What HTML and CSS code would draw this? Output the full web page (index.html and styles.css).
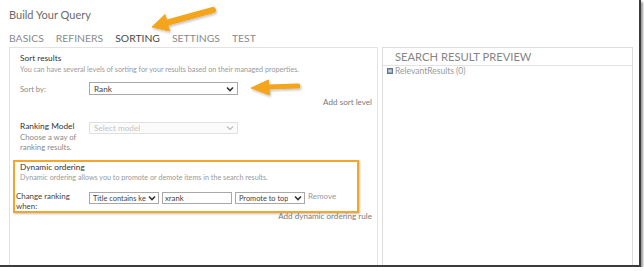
FILE: index.html
```html
<!DOCTYPE html>
<html lang="en">
<head>
    <meta charset="UTF-8">
    <title>Build Your Query</title>
    <link rel="stylesheet" href="styles.css">
</head>
<body>
    <div class="shot">
        <h1 class="title">Build Your Query</h1>
        <ul class="tabs">
            <li>BASICS</li>
            <li>REFINERS</li>
            <li class="active">SORTING</li>
            <li>SETTINGS</li>
            <li>TEST</li>
        </ul>

        <div class="panels">
            <div class="panel left">
                <div class="section-title">Sort results</div>
                <div class="desc">You can have several levels of sorting for your results based on their managed properties.</div>

                <div class="row sort-row">
                    <span class="label">Sort by:</span>
                    <div class="select wide">Rank<span class="chev"><svg width="8" height="6" viewBox="0 0 8 6"><path d="M1 1.5 L4 4.5 L7 1.5" fill="none" stroke="#333" stroke-width="1.6"/></svg></span></div>
                </div>
                <div class="link-right">Add sort level</div>

                <div class="row model-row">
                    <div class="model-label">
                        <div class="section-title">Ranking Model</div>
                        <div class="desc">Choose a way of ranking results.</div>
                    </div>
                    <div class="select wide disabled">Select model<span class="chev"><svg width="8" height="6" viewBox="0 0 8 6"><path d="M1 1.5 L4 4.5 L7 1.5" fill="none" stroke="#bbb" stroke-width="1.2"/></svg></span></div>
                </div>

                <div class="dynamic">
                    <div class="section-title">Dynamic ordering</div>
                    <div class="desc">Dynamic ordering allows you to promote or demote items in the search results.</div>
                    <div class="row rule-row">
                        <span class="rule-label">Change ranking when:</span>
                        <div class="select small"><span class="clip">Title contains ke</span><span class="chev"><svg width="8" height="6" viewBox="0 0 8 6"><path d="M1 1.5 L4 4.5 L7 1.5" fill="none" stroke="#333" stroke-width="1.6"/></svg></span></div>
                        <div class="input">xrank</div>
                        <div class="select small"><span class="clip">Promote to top</span><span class="chev"><svg width="8" height="6" viewBox="0 0 8 6"><path d="M1 1.5 L4 4.5 L7 1.5" fill="none" stroke="#333" stroke-width="1.6"/></svg></span></div>
                        <span class="remove">Remove</span>
                    </div>
                </div>
                <div class="link-right rule-link">Add dynamic ordering rule</div>
            </div>

            <div class="panel right">
                <div class="preview-head">SEARCH RESULT PREVIEW</div>
                <div class="preview-item">
                    <svg width="6" height="6" viewBox="0 0 6 6"><rect x="0.5" y="0.5" width="5" height="5" fill="#8fa3bd" stroke="#5d7391"/><rect x="1.5" y="2.5" width="3" height="1" fill="#fff"/></svg>
                    RelevantResults (0)
                </div>
            </div>
        </div>

        <svg class="arrows" width="639" height="265" viewBox="0 0 639 265">
            <g fill="#f5a51c" stroke="#f5a51c" filter="url(#sh)">
                <line x1="213" y1="10" x2="166" y2="23" stroke-width="6" stroke-linecap="round"/>
                <polygon points="152,27 169.5,31 165,14.5" stroke-width="1" stroke-linejoin="round"/>
                <path d="M298 86 Q285 86.5 268 87" fill="none" stroke-width="5" stroke-linecap="round"/>
                <polygon points="251,88 269.5,95 268.5,80" stroke-width="1" stroke-linejoin="round"/>
            </g>
            <defs>
                <filter id="sh" x="-20%" y="-20%" width="140%" height="160%">
                    <feDropShadow dx="1" dy="1.5" stdDeviation="1" flood-color="#000" flood-opacity="0.25"/>
                </filter>
            </defs>
        </svg>
    </div>
</body>
</html>
```

FILE: styles.css
```css
body {
    margin: 0;
    background: #fff;
    font-family: Lato, "Open Sans", sans-serif;
}
.shot {
    position: relative;
    width: 639px;
    height: 265px;
    overflow: hidden;
    background: #fff;
    border-right: 2px solid #3c3c3c;
    border-bottom: 2px solid #3c3c3c;
    box-shadow: 2px 2px 2px #9a9a9a;
}
.title {
    margin: 0;
    padding: 5px 0 0 9px;
    font-size: 11px;
    line-height: 19px;
    font-weight: 400;
    color: #6a6a6a;
}
.tabs {
    list-style: none;
    margin: 0;
    padding: 5px 0 0 9px;
    display: flex;
    gap: 12px;
    font-size: 10.4px;
    line-height: 18px;
    font-weight: 400;
    color: #8a8a8a;
}
.tabs .active {
    color: #4a4a4a;
}
.panels {
    display: flex;
    gap: 4px;
    padding-left: 9px;
}
.panel {
    height: 240px;
    border: 1px solid #e2e2e2;
    box-sizing: border-box;
}
.panel.left {
    width: 369px;
    padding: 5px 5px 0 10px;
}
.panel.right {
    width: 251px;
    border-color: #dcdcdc;
}
.section-title {
    font-size: 8.3px;
    line-height: 11px;
    color: #333;
}
.desc {
    font-size: 7.2px;
    line-height: 11px;
    color: #9a9a9a;
}
.row {
    display: flex;
    align-items: center;
}
.label {
    width: 69px;
    font-size: 7.6px;
    color: #8a8a8a;
}
.sort-row {
    margin-top: 7px;
}
.select {
    height: 13px;
    box-sizing: border-box;
    border: 1px solid #a8a8a8;
    display: flex;
    align-items: center;
    justify-content: space-between;
    padding: 0 3px 0 4px;
    font-size: 8.2px;
    color: #444;
    background: #fff;
}
.select.wide {
    width: 149px;
}
.select.disabled {
    height: 12px;
    border-color: #e0e0e0;
    color: #c4c4c4;
    background: #fbfbfb;
}
.chev {
    display: flex;
    flex-shrink: 0;
}
.link-right {
    text-align: right;
    font-size: 8.1px;
    line-height: 10px;
    color: #7a7a7a;
    margin-top: 2px;
}
.model-row {
    margin-top: 14px;
    align-items: flex-start;
}
.model-label {
    width: 69px;
}
.model-label .desc {
    font-size: 7.8px;
    line-height: 10px;
    color: #8a8a8a;
}
.model-row .select {
    margin-top: 1px;
}
.dynamic {
    margin: 8px 13px 0 -7px;
    border: 2px solid #f3a62a;
    padding: 0 0 0 5px;
    box-shadow: 1px 1px 2px rgba(0,0,0,0.25);
}
.dynamic .desc {
    line-height: 10px;
}
.rule-row {
    margin: 8px 0 0 -4px;
    gap: 3px;
    align-items: flex-start;
}
.rule-label {
    width: 70px;
    font-size: 7.9px;
    line-height: 10px;
    color: #444;
}
.select.small {
    width: 70px;
    height: 12px;
    margin-top: 1px;
    padding: 0 2px 0 3px;
    font-size: 7.4px;
}
.clip {
    white-space: nowrap;
    overflow: hidden;
}
.input {
    width: 70px;
    height: 12px;
    margin-top: 1px;
    box-sizing: border-box;
    border: 1px solid #a8a8a8;
    font-size: 7.7px;
    line-height: 10px;
    padding-left: 2px;
    color: #444;
}
.remove {
    font-size: 8px;
    line-height: 10px;
    color: #999;
}
.rule-link {
    margin-top: -2px;
}
.preview-head {
    height: 17px;
    border-bottom: 1px solid #e2e2e2;
    padding-left: 12px;
    font-size: 11.2px;
    line-height: 17px;
    font-weight: 400;
    color: #858585;
}
.preview-item {
    display: flex;
    align-items: center;
    gap: 2px;
    padding: 0 0 0 4px;
    font-size: 8.5px;
    line-height: 10px;
    color: #9a9a9a;
}
.arrows {
    position: absolute;
    left: 0;
    top: 0;
    pointer-events: none;
}
```
